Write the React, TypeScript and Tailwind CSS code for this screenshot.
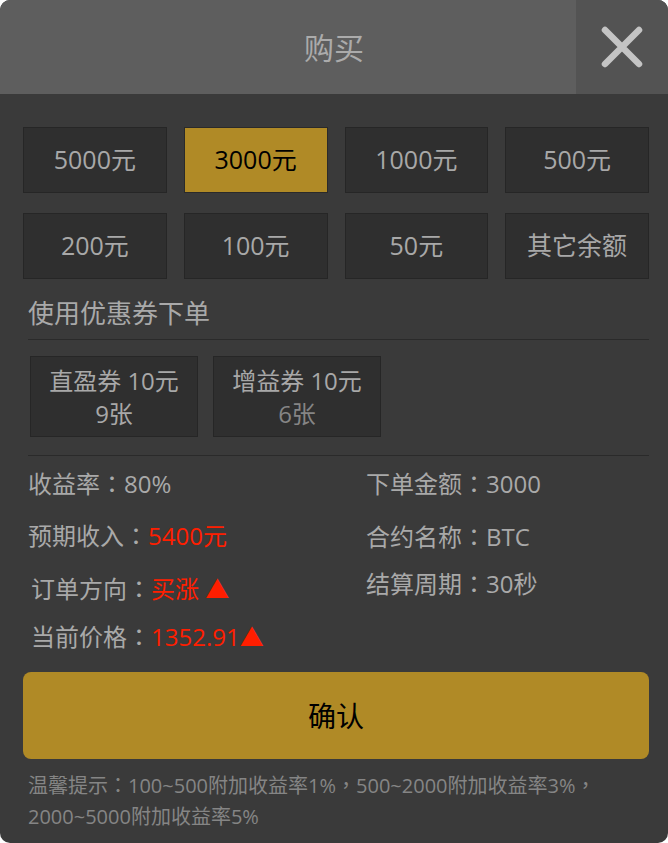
const amounts = ['5000元', '3000元', '1000元', '500元', '200元', '100元', '50元', '其它余额'];

const font = { fontFamily: '"Open Sans", "Noto Sans CJK SC", sans-serif' };

// centred full-width punctuation, as in the reference
function P({ c }: { c: string }) {
  return <span style={{ fontFamily: '"Noto Sans CJK TC", sans-serif' }}>{c}</span>;
}

function InfoRow({ label, value, red, className }: { label: string; value: string; red?: boolean; className?: string }) {
  return (
    <div className={`h-[36px] leading-[36px] text-[24px] text-[#a9a9a9] whitespace-nowrap ${className ?? ''}`}>
      {label}
      <P c="：" />
      <span className={red ? 'text-[#ff1e00]' : ''}>{value}</span>
    </div>
  );
}

export default function App() {
  return (
    <div className="w-[668px] h-[843px] bg-white" style={font}>
      <div className="w-full h-full bg-[#3a3a3a] rounded-[10px] overflow-hidden flex flex-col">
        <header className="h-[94px] flex bg-[#5e5e5e] shrink-0">
          <div className="flex-1 flex items-center justify-center text-[30px] text-[#ababab] pl-[92px]">购买</div>
          <div className="w-[92px] bg-[#535353] flex items-center justify-center">
            <svg width="42" height="42" viewBox="0 0 42 42">
              <path d="M4 4 L38 38 M38 4 L4 38" stroke="#c4c4c4" strokeWidth="6.5" strokeLinecap="round" />
            </svg>
          </div>
        </header>

        <div className="pl-[23px] pr-[19px] pt-[33px]">
          <div className="grid grid-cols-4 gap-x-[17px] gap-y-[20px]">
            {amounts.map((a) => (
              <div
                key={a}
                className={`h-[66px] flex items-center justify-center text-[25px] border ${
                  a === '3000元'
                    ? 'bg-[#b08a26] border-[#2a2a2a] text-black'
                    : 'bg-[#2f2f2f] border-[#262626] text-[#a8a8a8]'
                }`}
              >
                {a}
              </div>
            ))}
          </div>

          <div className="mt-[17px] px-[5px] h-[34px] leading-[34px] text-[26px] text-[#a9a9a9]">使用优惠券下单</div>
          <div className="mt-[9px] ml-[5px] h-[1px] bg-[#2a2a2a]" />

          <div className="mt-[16px] ml-[7px] flex gap-[15px]">
            <div className="w-[168px] h-[81px] bg-[#2f2f2f] border border-[#262626] flex flex-col items-center justify-center text-[24px] leading-[33px] text-[#a8a8a8]">
              <div>直盈券 10元</div>
              <div>9张</div>
            </div>
            <div className="w-[168px] h-[81px] bg-[#2f2f2f] border border-[#262626] flex flex-col items-center justify-center text-[24px] leading-[33px] text-[#a8a8a8]">
              <div>增益券 10元</div>
              <div className="text-[#858585]">6张</div>
            </div>
          </div>

          <div className="mt-[18px] ml-[5px] h-[1px] bg-[#2a2a2a]" />

          <div className="mt-[9px] flex">
            <div className="w-[343px] pl-[5px]">
              <InfoRow label="收益率" value="80%" />
              <InfoRow label="预期收入" value="5400元" red className="mt-[16px]" />
              <InfoRow label="订单方向" value="买涨 ▲" red className="mt-[17px] ml-[3px]" />
              <InfoRow label="当前价格" value="1352.91▲" red className="mt-[12px] ml-[3px]" />
            </div>
            <div>
              <InfoRow label="下单金额" value="3000" />
              <InfoRow label="合约名称" value="BTC" className="mt-[17px]" />
              <InfoRow label="结算周期" value="30秒" className="mt-[11px]" />
            </div>
          </div>

          <button className="mt-[18px] w-full h-[87px] rounded-[8px] bg-[#b08a26] text-[28px] text-black flex items-center justify-center">
            确认
          </button>

          <p className="mt-[10px] px-[5px] text-[20px] leading-[31px] text-[#858585]">
            温馨提示<P c="：" />100~500附加收益率1%<P c="，" />500~2000附加收益率3%<P c="，" />2000~5000附加收益率5%
          </p>
        </div>
      </div>
    </div>
  );
}
